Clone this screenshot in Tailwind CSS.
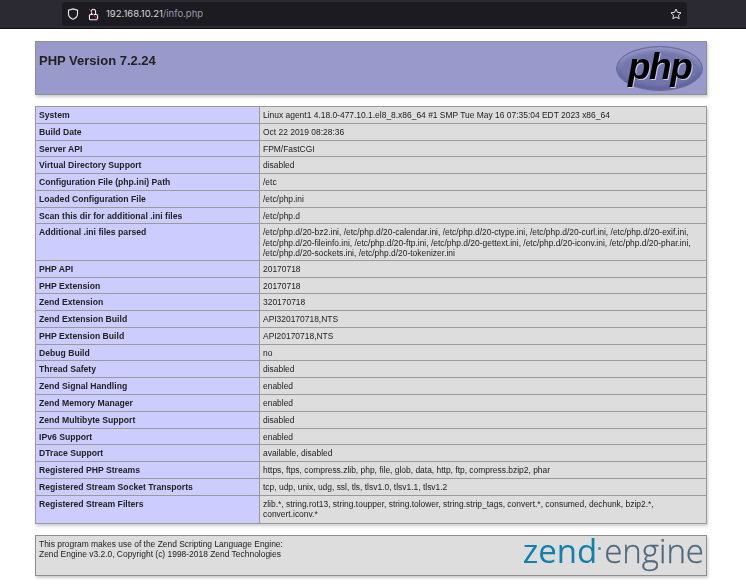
<!DOCTYPE html>
<html lang="en">
  <head>
    <meta charset="UTF-8" />
    <meta name="viewport" content="width=device-width, initial-scale=1.0" />
    <title>phpinfo()</title>
    <script src="https://cdn.jsdelivr.net/npm/@tailwindcss/browser@4"></script>
  </head>
  <body class="h-[584px] w-[746px] overflow-hidden bg-white font-['Liberation_Sans',sans-serif] text-[#222]">
    <!-- browser toolbar -->
    <div class="flex h-[29px] items-center border-b border-[#111] bg-[#2b2a33] pl-[62px]">
      <div class="flex h-[24px] w-[625px] items-center rounded-[3px] bg-[#1c1b22] pl-[5px] pr-[5px] text-[#fbfbfe]">
        <svg class="h-[12px] w-[12px]" viewBox="0 0 16 16" fill="none" stroke="#e8e8ea" stroke-width="1.5">
          <path d="M8 1.2 14 3v5c0 3.400-2.600 5.700-6 6.900C4.600 13.700 2 11.400 2 8V3z" />
        </svg>
        <svg class="ml-[8px] h-[13px] w-[13px]" viewBox="0 0 16 16" fill="none" stroke="#f0f0f2" stroke-width="1.4">
          <path d="M5.500 7.500V4a2.500 2.500 0 0 1 5 0v3.500" />
          <rect x="3" y="8" width="10" height="6.500" rx="1.200" />
          <path d="M2.500 1 13.500 15" stroke="#e22850" stroke-width="1.100" />
        </svg>
        <span class="ml-[6px] font-['Inter',sans-serif] text-[9.500px] leading-none text-[#d8d8dc]">192.168.10.21<span class="text-[#9a99a3]">/info.php</span></span>
        <svg class="ml-auto h-[12px] w-[12px]" viewBox="0 0 16 16" fill="none" stroke="#e8e8ea" stroke-width="1.300">
          <path d="M8 1.500 10 5.800l4.700.6-3.400 3.200.9 4.700L8 12l-4.200 2.300.9-4.700L1.300 6.400 6 5.800z" stroke-linejoin="round" />
        </svg>
      </div>
    </div>

    <div class="ml-[35px] w-[672px] pt-[12px] blur-[0.3px]">
      <!-- header -->
      <div class="flex h-[54px] justify-between border border-[#8f8f8f] bg-[#9999cc] shadow-[1px_2px_3px_#ccc]">
        <h1 class="pl-[3px] pt-[11px] text-[13px] leading-[15px] font-bold">PHP Version 7.2.24</h1>
        <div class="relative mr-[3px] mt-[4px] h-[45px] w-[87px] rounded-[50%] border border-[#6a6aa0] bg-[#7377ad] shadow-[inset_0_-3px_5px_#5d5f96,inset_0_3px_4px_#9a9dca]">
          <span class="absolute left-[11px] top-[5px] text-[37px] leading-[30px] font-bold italic tracking-[-1.500px] text-black [text-shadow:1px_1px_0_#c8c9e4]">php</span>
        </div>
      </div>

      <!-- config table -->
      <div class="mt-[11px] border-t border-[#9a9a9a] text-[8.450px] leading-[10.400px] shadow-[1px_2px_3px_#ccc] [&>div]:grid [&>div]:h-[16.770px] [&>div]:grid-cols-[225px_447px] [&>div]:border-b [&>div]:border-[#9a9a9a] [&_b]:border-x [&_b]:border-[#9a9a9a] [&_b]:bg-[#ccccff] [&_b]:px-[3px] [&_b]:pt-[3px] [&_b]:text-[8.650px] [&_b]:font-bold [&_span]:border-r [&_span]:border-[#9a9a9a] [&_span]:bg-[#dddddd] [&_span]:pl-[3px] [&_span]:pr-[3px] [&_span]:pt-[3px]">
        <div><b>System</b><span>Linux agent1 4.18.0-477.10.1.el8_8.x86_64 #1 SMP Tue May 16 07:35:04 EDT 2023 x86_64</span></div>
        <div><b>Build Date</b><span>Oct 22 2019 08:28:36</span></div>
        <div><b>Server API</b><span>FPM/FastCGI</span></div>
        <div><b>Virtual Directory Support</b><span>disabled</span></div>
        <div><b>Configuration File (php.ini) Path</b><span>/etc</span></div>
        <div><b>Loaded Configuration File</b><span>/etc/php.ini</span></div>
        <div><b>Scan this dir for additional .ini files</b><span>/etc/php.d</span></div>
        <div class="h-[36.500px]!"><b>Additional .ini files parsed</b><span>/etc/php.d/20-bz2.ini, /etc/php.d/20-calendar.ini, /etc/php.d/20-ctype.ini, /etc/php.d/20-curl.ini, /etc/php.d/20-exif.ini, /etc/php.d/20-fileinfo.ini, /etc/php.d/20-ftp.ini, /etc/php.d/20-gettext.ini, /etc/php.d/20-iconv.ini, /etc/php.d/20-phar.ini, /etc/php.d/20-sockets.ini, /etc/php.d/20-tokenizer.ini</span></div>
        <div><b>PHP API</b><span>20170718</span></div>
        <div><b>PHP Extension</b><span>20170718</span></div>
        <div><b>Zend Extension</b><span>320170718</span></div>
        <div><b>Zend Extension Build</b><span>API320170718,NTS</span></div>
        <div><b>PHP Extension Build</b><span>API20170718,NTS</span></div>
        <div><b>Debug Build</b><span>no</span></div>
        <div><b>Thread Safety</b><span>disabled</span></div>
        <div><b>Zend Signal Handling</b><span>enabled</span></div>
        <div><b>Zend Memory Manager</b><span>enabled</span></div>
        <div><b>Zend Multibyte Support</b><span>disabled</span></div>
        <div><b>IPv6 Support</b><span>enabled</span></div>
        <div><b>DTrace Support</b><span>available, disabled</span></div>
        <div><b>Registered PHP Streams</b><span>https, ftps, compress.zlib, php, file, glob, data, http, ftp, compress.bzip2, phar</span></div>
        <div><b>Registered Stream Socket Transports</b><span>tcp, udp, unix, udg, ssl, tls, tlsv1.0, tlsv1.1, tlsv1.2</span></div>
        <div class="h-[28.300px]!"><b>Registered Stream Filters</b><span>zlib.*, string.rot13, string.toupper, string.tolower, string.strip_tags, convert.*, consumed, dechunk, bzip2.*, convert.iconv.*</span></div>
      </div>

      <!-- footer -->
      <div class="mt-[11px] flex h-[41px] justify-between border border-[#8f8f8f] bg-[#dddddd] pl-[3px] pt-[3px] text-[8.450px] leading-[10.400px] shadow-[1px_2px_3px_#ccc]">
        <p>This program makes use of the Zend Scripting Language Engine:<br />Zend Engine v3.2.0, Copyright (c) 1998-2018 Zend Technologies</p>
        <div class="mr-[2px] mt-[-5px] flex h-[33px] items-baseline font-['Open_Sans',sans-serif] text-[33px] leading-[33px]">
          <span class="font-medium text-[#1180aa]">zend</span><span class="mb-[17px] ml-[1px] h-[3px] w-[3px] self-end rounded-full bg-[#4d93ab]"></span><span class="ml-[3px] font-light text-[#50697d] [-webkit-text-stroke:0.300px_#50697d]">engine</span>
        </div>
      </div>
    </div>
  </body>
</html>
